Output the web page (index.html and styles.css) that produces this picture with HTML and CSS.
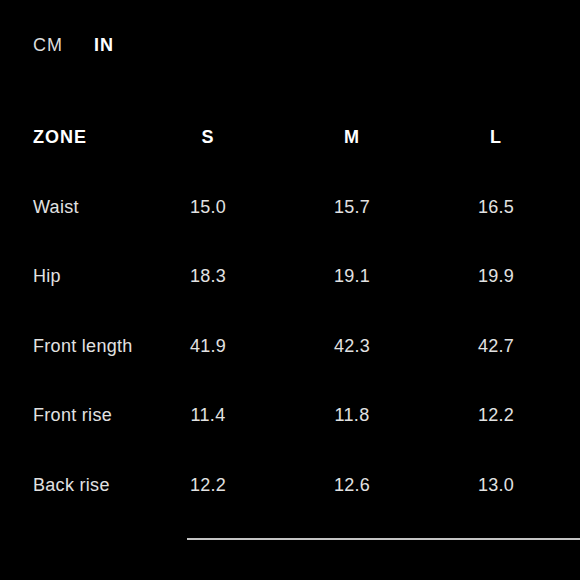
FILE: index.html
```html
<!DOCTYPE html>
<html lang="en">
<head>
<meta charset="utf-8">
<title>Size chart</title>
<link rel="stylesheet" href="styles.css">
</head>
<body>
<main class="chart">
  <div class="units">
    <span class="unit">CM</span>
    <span class="unit unit-active">IN</span>
  </div>
  <div class="table">
    <div class="cell head zone">ZONE</div>
    <div class="cell head size">S</div>
    <div class="cell head size">M</div>
    <div class="cell head size">L</div>

    <div class="cell label">Waist</div>
    <div class="cell val">15.0</div>
    <div class="cell val">15.7</div>
    <div class="cell val">16.5</div>

    <div class="cell label">Hip</div>
    <div class="cell val">18.3</div>
    <div class="cell val">19.1</div>
    <div class="cell val">19.9</div>

    <div class="cell label">Front length</div>
    <div class="cell val">41.9</div>
    <div class="cell val">42.3</div>
    <div class="cell val">42.7</div>

    <div class="cell label">Front rise</div>
    <div class="cell val">11.4</div>
    <div class="cell val">11.8</div>
    <div class="cell val">12.2</div>

    <div class="cell label">Back rise</div>
    <div class="cell val">12.2</div>
    <div class="cell val">12.6</div>
    <div class="cell val">13.0</div>
  </div>
  <div class="rule"></div>
</main>
</body>
</html>
```
FILE: styles.css
```css
html, body {
  margin: 0;
  padding: 0;
  background: #000;
}
body {
  width: 580px;
  height: 580px;
  overflow: hidden;
  font-family: "Liberation Sans", Arial, sans-serif;
  color: #e2e2e2;
}
.chart {
  padding: 35px 0 0 33px;
}
.units {
  display: flex;
  gap: 31px;
  height: 20px;
  line-height: 20px;
  font-size: 18px;
  letter-spacing: 1px;
}
.unit {
  color: #dcdcdc;
}
.unit-active {
  color: #fff;
  font-weight: bold;
}
.table {
  margin-top: 48px;
  display: grid;
  grid-template-columns: 103px 144px 144px 144px;
  grid-auto-rows: 69.5px;
  font-size: 18px;
  line-height: 69.5px;
}
.cell {
  white-space: nowrap;
  letter-spacing: 0.3px;
}
.head {
  color: #fff;
  font-weight: bold;
  letter-spacing: 1px;
}
.size, .val {
  text-align: center;
}
.rule {
  margin-top: 18px;
  margin-left: 154px;
  height: 2px;
  background: #c4c4c4;
}
```
